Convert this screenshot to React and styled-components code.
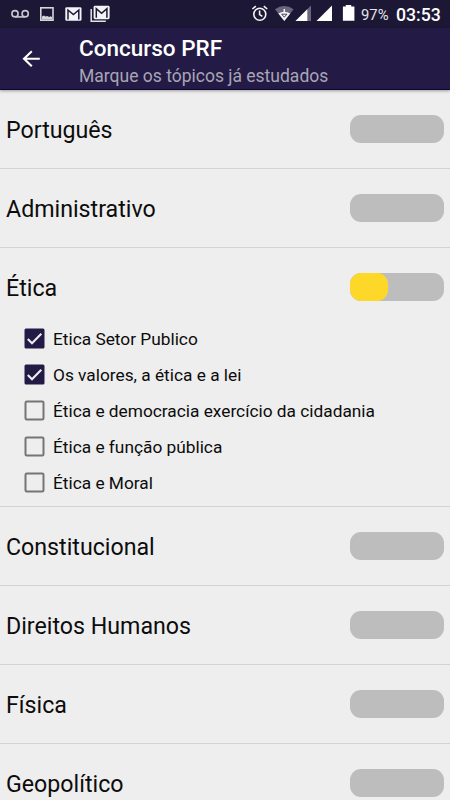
import styled, { createGlobalStyle } from 'styled-components';

const GlobalStyle = createGlobalStyle`
  * {
    box-sizing: border-box;
  }
  body {
    margin: 0;
    background-color: #eeeeee;
    font-family: Roboto, sans-serif;
  }
`;

const Screen = styled.div`
  display: flex;
  flex-direction: column;
  width: 450px;
  height: 800px;
  overflow: hidden;
  background-color: #eeeeee;
`;

const StatusBar = styled.div`
  flex: none;
  display: flex;
  align-items: center;
  justify-content: space-between;
  height: 28px;
  background-color: #1d1736;
`;

const StatusIcons = styled.svg`
  display: block;
  flex: none;
  height: 28px;
  width: ${(props) => props.$width}px;
`;

const StatusRight = styled.div`
  display: flex;
  align-items: center;
  width: 200px;
  color: #fff;
`;

const Battery = styled.div`
  flex: none;
  width: 35px;
  margin-left: 5px;
  padding-top: 1px;
  font-size: 14.8px;
  line-height: 26px;
  color: #e4e3e8;
  white-space: nowrap;
`;

const Clock = styled.div`
  font-size: 17.7px;
  font-weight: 500;
  line-height: 28px;
  padding-top: 1px;
`;

const Header = styled.header`
  flex: none;
  display: flex;
  align-items: center;
  height: 62px;
  background-color: #231b45;
  border-bottom: 1px solid #0d0636;
  box-shadow: 0 1px 3px rgba(0, 0, 0, 0.35);
  z-index: 1;
`;

const BackButton = styled.div`
  display: flex;
  width: 79px;
  padding-left: 22px;
`;

const HeaderText = styled.div`
  padding-top: 7px;
`;

const HeaderTitle = styled.div`
  font-size: 22.5px;
  font-weight: 500;
  line-height: 26px;
  color: #fff;
`;

const HeaderSubtitle = styled.div`
  padding-top: 1px;
  font-size: 17.5px;
  line-height: 28px;
  color: #a9a6b6;
`;

const List = styled.div`
  flex: none;
`;

const Section = styled.section`
  border-bottom: 1px solid #d3d3d3;
`;

const SectionRow = styled.div`
  display: flex;
  align-items: center;
  justify-content: space-between;
  height: 78px;
  padding: 0 6px;
`;

const SectionName = styled.div`
  padding-top: 2px;
  font-size: 23.2px;
  line-height: 28px;
  color: #0c0c0c;
`;

const Track = styled.div`
  width: 94px;
  height: 28px;
  border-radius: 11px;
  background-color: #bdbdbd;
  overflow: hidden;
`;

const Fill = styled.div`
  height: 100%;
  border-radius: 11px;
  background-color: #fdd829;
`;

const Topics = styled.div`
  margin-top: -5px;
  padding: 0 0 6px 24px;
`;

const Topic = styled.div`
  display: flex;
  align-items: center;
  height: 35.8px;
`;

const TopicName = styled.div`
  padding: 1px 0 0 8px;
  font-size: 17.3px;
  line-height: 24px;
  color: #0c0c0c;
`;

const sections = [
  { name: 'Português', progress: 0 },
  { name: 'Administrativo', progress: 0 },
  {
    name: 'Ética',
    progress: 40,
    topics: [
      { name: 'Etica Setor Publico', done: true },
      { name: 'Os valores, a ética e a lei', done: true },
      { name: 'Ética e democracia exercício da cidadania', done: false },
      { name: 'Ética e função pública', done: false },
      { name: 'Ética e Moral', done: false },
    ],
  },
  { name: 'Constitucional', progress: 0 },
  { name: 'Direitos Humanos', progress: 0 },
  { name: 'Física', progress: 0 },
  { name: 'Geopolítico', progress: 0 },
];

const NotificationIcons = () => (
  <StatusIcons $width={120} viewBox="0 0 120 28" fill="none">
    {/* voicemail */}
    <g stroke="#c9c7d0" strokeWidth="1.6">
      <circle cx="15" cy="13.7" r="3.1" />
      <circle cx="25.2" cy="13.7" r="3.1" />
      <path d="M15 16.9h10.2" />
    </g>
    {/* picture */}
    <rect x="40.8" y="7.8" width="12.2" height="12.4" stroke="#d6d5db" strokeWidth="1.6" />
    <path d="M42 19.5v-3l2-1 1.6 1 1.6-.6 2 1.2 1.4-.8 1.4.8v2.4z" fill="#d6d5db" />
    {/* mail */}
    <rect x="65.3" y="7.2" width="16.2" height="13.6" rx="1.4" fill="#f4f4f6" />
    <path d="M68 19.4V10l5.4 4.6L78.8 10v9.4" stroke="#1d1736" strokeWidth="1.5" />
    {/* mail stack */}
    <path d="M91.2 9v12.3h14.6" stroke="#e4e3e8" strokeWidth="1.5" />
    <rect x="93.6" y="5.8" width="16" height="13.4" rx="1.4" fill="#f4f4f6" />
    <path d="M96.3 17.8V8.6l5.3 4.6 5.3-4.6v9.2" stroke="#1d1736" strokeWidth="1.5" />
  </StatusIcons>
);

const SystemIcons = () => (
  <StatusIcons $width={106} viewBox="250 0 106 28" fill="none">
    {/* alarm */}
    <g stroke="#f4f4f6" strokeWidth="1.6">
      <circle cx="259.8" cy="14.3" r="6" />
      <path d="M259.6 10.4v4.2l2.8 1.8M252.4 9l3.4-2.8M267.2 9l-3.4-2.8" />
    </g>
    {/* wifi */}
    <path d="M275 9.2Q284.3 2.6 293.6 9.2L284.3 21z" fill="#6b667d" />
    <path d="M278.3 13.5Q284.3 9.8 290.3 13.5L284.3 21z" fill="#f4f4f6" />
    <path d="M284.3 9v5" stroke="#f4f4f6" strokeWidth="1.5" />
    <path d="M281.7 14.2h5.2l-2.6 3z" stroke="#1d1736" strokeWidth=".8" />
    {/* signal */}
    <path d="M311 5.5v15.5h-15.5z" fill="#6b667d" />
    <path d="M307.3 9.2v11.8h-11.8z" fill="#fff" />
    <path d="M332 5.5v15.5h-15.5z" fill="#fff" />
    {/* battery */}
    <path d="M345.8 5h5.4v1.5h3.2v14.2h-11.5v-14.2h2.9z" fill="#fff" />
  </StatusIcons>
);

const BackIcon = () => (
  <svg width="19" height="18" viewBox="0 0 19 18" fill="none" stroke="#fff" strokeWidth="2.1">
    <path d="M17.8 8.7H2.2M9.8 1.2L2 8.7l7.8 7.5" />
  </svg>
);

const Checkbox = ({ checked }) => (
  <svg width="21" height="21" viewBox="0 0 21 21" fill="none">
    {checked ? (
      <>
        <rect x=".5" y=".5" width="20" height="20" rx="1.5" fill="#231b45" />
        <path d="M3.8 11l4.2 4.2 9.3-9.4" stroke="#eeeeee" strokeWidth="2.1" />
      </>
    ) : (
      <rect x="1.5" y="1.5" width="18" height="18" rx="1.2" stroke="#757575" strokeWidth="2" />
    )}
  </svg>
);

const App = () => {
  return (
    <Screen>
      <GlobalStyle />
      <StatusBar>
        <NotificationIcons />
        <StatusRight>
          <SystemIcons />
          <Battery>97%</Battery>
          <Clock>03:53</Clock>
        </StatusRight>
      </StatusBar>
      <Header>
        <BackButton>
          <BackIcon />
        </BackButton>
        <HeaderText>
          <HeaderTitle>Concurso PRF</HeaderTitle>
          <HeaderSubtitle>Marque os tópicos já estudados</HeaderSubtitle>
        </HeaderText>
      </Header>
      <List>
        {sections.map((section) => (
          <Section key={section.name}>
            <SectionRow>
              <SectionName>{section.name}</SectionName>
              <Track>
                <Fill style={{ width: `${section.progress}%` }} />
              </Track>
            </SectionRow>
            {section.topics && (
              <Topics>
                {section.topics.map((topic) => (
                  <Topic key={topic.name}>
                    <Checkbox checked={topic.done} />
                    <TopicName>{topic.name}</TopicName>
                  </Topic>
                ))}
              </Topics>
            )}
          </Section>
        ))}
      </List>
    </Screen>
  );
};

export default App;
